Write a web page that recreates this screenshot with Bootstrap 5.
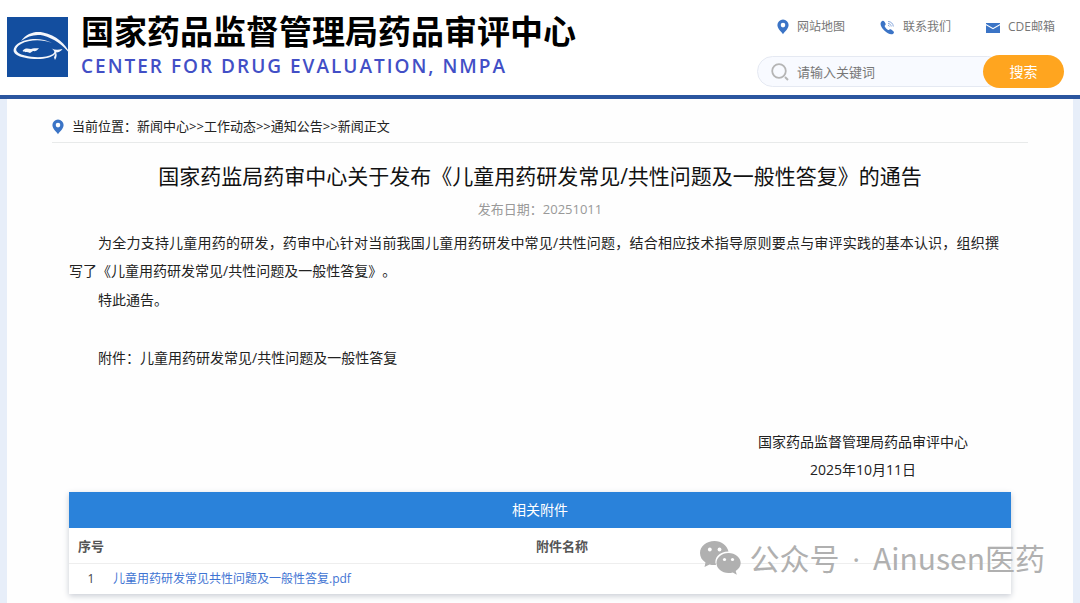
<!DOCTYPE html>
<html lang="zh-CN">
<head>
<meta charset="utf-8">
<meta name="viewport" content="width=device-width, initial-scale=1">
<title>国家药品监督管理局药品审评中心</title>
<link href="https://cdn.jsdelivr.net/npm/bootstrap@5.3.0/dist/css/bootstrap.min.css" rel="stylesheet">
<style>
body{font-family:"Open Sans","Noto Sans CJK SC",sans-serif;font-size:14px;line-height:28px;color:#222;background:#e7eef9}
a{text-decoration:none}
.site-header{background:#fff;border-bottom:4px solid #2b569f;padding:12px 16px 3px 7px}
.emblem{width:61px;height:60px;margin:5px 13px 15px 0}
.site-name{font-size:33px;line-height:40px;font-weight:700;color:#000}
.site-name-en{font-size:19px;line-height:28px;font-weight:600;letter-spacing:2px;color:#424fc6}
.quick{gap:35px;padding:5px 9px 0 0}
.quick a{font-size:12px;line-height:20px;color:#777}
.search-box{width:307px;height:33px}
.search-box .field{background:#f8faff;border:1px solid #e5e9f2;border-radius:16px;height:31px;padding-left:13px;margin-right:-20px}
.search-box input{background:transparent;border:0;outline:0;font-size:13px;color:#777;min-width:0;padding:0}
.search-box input::placeholder{color:#777;opacity:1}
.search-btn{background:#ffa51f;color:#fff;border:0;border-radius:17px;width:81px;font-size:14px;line-height:20px;padding:0}
.sheet{background:#fefefe;margin:0 7px;padding:12px 45px 8px}
.crumbs{font-size:13px;line-height:31px;color:#222;border-bottom:1px solid #e8eaea}
.crumbs a{color:inherit}
.article{padding:0 17px}
.headline{font-size:21px;line-height:34px;font-weight:400;color:#111;margin:16px 0 6px}
.pubdate{font-size:13px;line-height:20px;color:#999;margin-bottom:10px}
.prose{margin-right:12px;text-spacing-trim:space-all}
.prose p{text-indent:29px;text-align:justify;margin:0 0 1px}
.signature{margin:55px 43px 0 0}
.files{box-shadow:0 2px 6px #c8ccd4}
.files table{font-size:12px;line-height:20px;background:#fff;color:#444}
.files caption{caption-side:top;background:#2a82da;color:#fff;font-size:14px;line-height:36px;padding:0}
.files th{font-size:13px;color:#555;padding:8px 0 7px;border-bottom:1px solid #eee}
.files td{padding:5px 0}
.files .num{width:44px}
.files a{color:#3f74d3}
.sign-mark{right:28px;bottom:24px;color:#b0b0b0;font-family:"Noto Sans CJK SC",sans-serif;font-size:30px;line-height:40px}
.sign-mark .dot{font-family:"Open Sans",sans-serif;margin:0 5px}
</style>
</head>
<body class="d-flex flex-column min-vh-100">
<svg width="0" height="0" class="position-absolute" aria-hidden="true">
  <symbol id="pin" viewBox="0 0 12 16"><path fill="#3b74c6" fill-rule="evenodd" d="M6 .5A5.6 5.6 0 0 0 .4 6.100c0 3.700 3.600 6.300 5.600 9.200 2-2.900 5.600-5.500 5.600-9.200A5.600 5.600 0 0 0 6 .5zm0 3.300a2.300 2.300 0 1 1 0 4.600 2.300 2.300 0 0 1 0-4.600z"/></symbol>
</svg>
<header class="site-header d-flex justify-content-between">
  <div class="d-flex">
    <svg class="emblem overflow-visible flex-shrink-0" viewBox="0 0 61 60" role="img" aria-label="CDE">
      <rect width="61" height="60" fill="#134e9f"/>
      <g fill="#f4f6fb">
        <path d="M14 24C20 16 28 14 36 15.500C49 18 59 27 63 37C56 28 47 21.500 36 18.500C28 17 21 19 14 24z"/>
        <path fill-rule="evenodd" d="M45 26C35 20 19 21 11 26.500C4 32 5 38 17 40.500C28 43 43 43 48.500 36.500L47 40.500L48 43C50 40 50 37 49 35.500C52 35.500 54 34 55.500 32C51 33 48 33 44.500 31.500C48 34 48 35 46 37C39 41 27 41 18 38.500C7 36 7 31 14 27C22 22.500 35 22 45 26z"/>
        <path d="M15.500 34C18 30.500 21 31.500 24 32C27 30.500 29 32 32 31C30 34 28 34.500 26 34L23 36C20 34.500 18 36 15.500 34z"/>
      </g>
    </svg>
    <div class="text-nowrap">
      <div class="site-name">国家药品监督管理局药品审评中心</div>
      <div class="site-name-en">CENTER FOR DRUG EVALUATION, NMPA</div>
    </div>
  </div>
  <div class="d-flex flex-column align-items-end">
    <nav class="quick d-flex" aria-label="快捷链接">
      <a href="#" class="d-flex align-items-center"><svg class="me-2" width="12" height="16"><use href="#pin"/></svg>网站地图</a>
      <a href="#" class="d-flex align-items-center"><svg class="me-2" width="15" height="15" viewBox="0 0 15 15"><path fill="#3b74c6" d="M1.300 1.700C2.300.5 3.700.6 4.500 1.800l1 1.700c.5 1-.1 1.700-.8 2.300-.4 1 2.700 4.400 4 4.200.7-.6 1.600-1 2.500-.4l1.900 1.300c1.300 1 1 1.900.1 2.800-1.800 1.600-5.700.2-8.900-3.100C.8 7.100-.4 3.500 1.300 1.700z"/><path fill="none" stroke="#86a7dc" d="M8 1.500c3 0 5.200 2.200 5.300 5M8 3.500c1.800 0 3.100 1.300 3.200 3M8 5.300c.8 0 1.300.5 1.400 1.200"/></svg>联系我们</a>
      <a href="#" class="d-flex align-items-center"><svg class="me-2" width="14" height="14" viewBox="0 0 14 14"><path fill="#3b74c6" d="M0 3h14v1L7 8 0 4zM0 5.200 7 9.200l7-4V13H0z"/></svg>CDE邮箱</a>
    </nav>
    <form class="search-box d-flex align-items-center mt-auto mb-1" role="search" onsubmit="return false">
      <div class="field d-flex align-items-center flex-grow-1 overflow-hidden">
        <svg class="me-2 flex-shrink-0" width="18" height="18" viewBox="0 0 18 18" fill="none" stroke="#b5b5b5"><circle cx="8" cy="8" r="6.800" stroke-width="1.800"/><path d="m14 14 3 3" stroke-width="2"/></svg>
        <input type="search" class="flex-grow-1" aria-label="请输入关键词" placeholder="请输入关键词">
      </div>
      <button class="search-btn position-relative align-self-stretch" type="submit">搜索</button>
    </form>
  </div>
</header>
<main class="sheet position-relative flex-grow-1">
  <nav class="crumbs d-flex align-items-center" aria-label="当前位置">
    <svg class="me-2" width="12" height="16"><use href="#pin"/></svg>
    <div>当前位置：<a href="#">新闻中心</a>&gt;&gt;<a href="#">工作动态</a>&gt;&gt;<a href="#">通知公告</a>&gt;&gt;新闻正文</div>
  </nav>
  <article class="article">
    <h1 class="headline text-center">国家药监局药审中心关于发布《儿童用药研发常见/共性问题及一般性答复》的通告</h1>
    <div class="pubdate text-center">发布日期：20251011</div>
    <div class="prose">
      <p>为全力支持儿童用药的研发，药审中心针对当前我国儿童用药研发中常见/共性问题，结合相应技术指导原则要点与审评实践的基本认识，组织撰写了《儿童用药研发常见/共性问题及一般性答复》。</p>
      <p>特此通告。</p>
      <p><br></p>
      <p>附件：儿童用药研发常见/共性问题及一般性答复</p>
    </div>
    <div class="d-flex justify-content-end">
      <div class="signature text-center">国家药品监督管理局药品审评中心<br>2025年10月11日</div>
    </div>
    <section class="files mt-2">
      <table class="w-100">
        <caption class="text-center">相关附件</caption>
        <thead><tr><th class="num text-center" scope="col">序号</th><th class="text-center" scope="col">附件名称</th></tr></thead>
        <tbody><tr><td class="num text-center">1</td><td><a href="#">儿童用药研发常见共性问题及一般性答复.pdf</a></td></tr></tbody>
      </table>
    </section>
  </article>
  <div class="sign-mark position-absolute d-flex align-items-center text-nowrap">
    <svg class="me-2" width="42" height="34" viewBox="0 0 42 34"><path fill="#b0b0b0" d="M14.500 0C6.500 0 0 5.200 0 12c0 4 2.100 7.200 5.500 9.500L4.500 26l5-2.600c2 .6 4 .8 6.500.6C13.500 17 19 10.500 28.500 10.500 27 4.500 21.500 0 14.500 0z"/><path fill="#b0b0b0" d="M28.500 12C21.800 12 16.500 16.500 16.500 22s5.300 10 12 10c1.600 0 3-.2 4.300-.6l4 2.300-1.100-3.800c3-1.900 5-4.700 5-7.900 0-5.500-5.500-10-12.200-10z"/><g fill="#fff"><circle cx="9.800" cy="8.500" r="1.900"/><circle cx="19.500" cy="8.500" r="1.900"/><circle cx="24.500" cy="18.500" r="1.600"/><circle cx="32.500" cy="18.500" r="1.600"/></g></svg>
    <span>公众号<span class="dot"> · </span>Ainusen医药</span>
  </div>
</main>
<script src="https://cdn.jsdelivr.net/npm/bootstrap@5.3.0/dist/js/bootstrap.bundle.min.js"></script>
</body>
</html>
